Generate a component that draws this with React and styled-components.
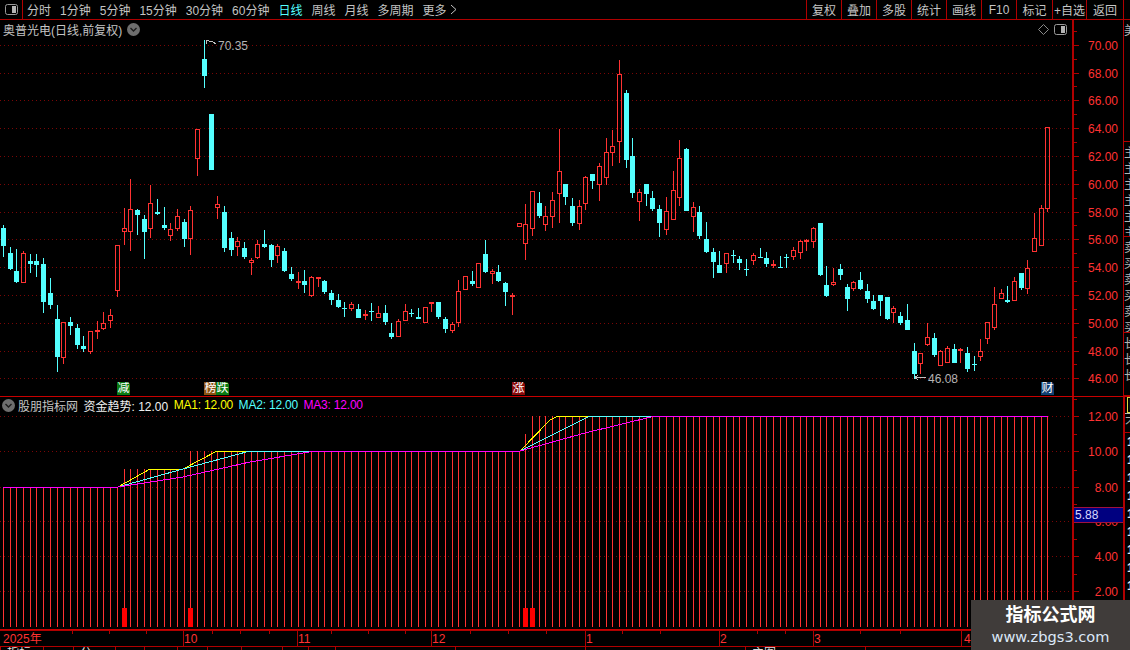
import React from "react";
import styled, { createGlobalStyle } from "styled-components";

const RED = "#ff3232";
const CYAN = "#54ffff";
const YELLOW = "#ffff00";
const MAGENTA = "#ff00ff";
const LINE = "#b00000";
const GRID = "#7a0606";
const UI_FONT = '"Liberation Sans", "Noto Sans CJK SC", sans-serif';

// type, high, body top, body bottom, low (in screen pixels)
const candles = [
  ["c", 225, 228, 246, 257], ["c", 247, 253, 269, 270], ["c", 249, 271, 282, 283], ["r", 251, 253, 283, 283],
  ["c", 254, 261, 264, 273], ["c", 254, 261, 265, 277], ["c", 258, 264, 302, 313], ["c", 278, 293, 305, 309],
  ["c", 305, 319, 357, 372], ["r", 322, 322, 358, 364], ["c", 317, 322, 326, 335], ["c", 324, 328, 345, 349],
  ["c", 336, 346, 349, 352], ["r", 331, 331, 352, 354], ["r", 321, 330, 332, 339], ["r", 312, 323, 329, 330],
  ["r", 309, 315, 321, 328], ["r", 245, 245, 291, 297], ["r", 208, 228, 232, 245], ["r", 179, 209, 232, 251],
  ["c", 209, 210, 215, 235], ["c", 215, 219, 232, 259], ["r", 185, 203, 229, 238], ["c", 199, 212, 214, 215],
  ["c", 207, 225, 228, 230], ["r", 223, 229, 236, 241], ["r", 209, 216, 229, 231], ["c", 219, 222, 239, 247],
  ["r", 206, 210, 239, 255], ["r", 129, 129, 159, 176], ["c", 40, 59, 76, 88], ["c", 114, 114, 170, 170],
  ["r", 196, 204, 208, 219], ["c", 206, 212, 248, 252], ["c", 232, 238, 250, 256], ["r", 237, 241, 247, 256],
  ["c", 242, 248, 257, 259], ["r", 258, 260, 263, 275], ["r", 240, 244, 258, 259], ["c", 230, 244, 247, 248],
  ["c", 244, 245, 260, 267], ["r", 244, 246, 256, 263], ["c", 248, 251, 271, 272], ["c", 267, 274, 279, 281],
  ["r", 272, 281, 282, 289], ["c", 270, 281, 285, 293], ["r", 276, 277, 296, 297], ["r", 277, 277, 278, 287],
  ["c", 280, 281, 292, 294], ["c", 290, 293, 300, 305], ["c", 294, 300, 307, 308], ["c", 302, 308, 309, 317],
  ["r", 302, 304, 309, 311], ["c", 304, 309, 318, 318], ["r", 310, 314, 315, 320], ["c", 303, 311, 312, 321],
  ["r", 306, 313, 318, 318], ["c", 305, 313, 322, 325], ["c", 323, 333, 337, 339], ["r", 319, 321, 337, 337],
  ["r", 304, 311, 321, 321], ["c", 309, 313, 314, 317], ["c", 308, 317, 319, 319], ["r", 307, 307, 323, 323],
  ["r", 302, 302, 304, 312], ["c", 302, 302, 317, 319], ["c", 317, 319, 329, 333], ["r", 322, 324, 331, 333],
  ["r", 280, 291, 323, 327], ["r", 276, 276, 290, 290], ["c", 271, 281, 284, 286], ["r", 263, 263, 288, 288],
  ["c", 240, 254, 272, 273], ["r", 269, 271, 274, 284], ["c", 265, 272, 281, 282], ["c", 282, 283, 292, 306],
  ["r", 293, 295, 297, 315], ["r", 223, 223, 227, 227], ["r", 204, 224, 244, 260], ["r", 191, 191, 229, 236],
  ["c", 192, 203, 216, 218], ["r", 206, 216, 225, 231], ["r", 192, 200, 217, 228], ["r", 129, 171, 194, 223],
  ["c", 184, 184, 197, 205], ["c", 198, 206, 223, 226], ["r", 200, 206, 224, 230], ["r", 176, 177, 204, 210],
  ["c", 174, 174, 181, 189], ["r", 163, 166, 185, 201], ["r", 138, 152, 178, 185], ["r", 130, 146, 153, 166],
  ["r", 60, 74, 142, 163], ["c", 90, 93, 160, 168], ["c", 138, 156, 193, 198], ["r", 189, 192, 202, 221],
  ["c", 184, 184, 194, 206], ["c", 191, 198, 209, 211], ["c", 205, 209, 223, 237], ["r", 197, 211, 230, 235],
  ["r", 171, 190, 220, 220], ["r", 140, 158, 198, 206], ["c", 148, 149, 211, 211], ["r", 202, 207, 217, 232],
  ["c", 206, 212, 236, 239], ["c", 222, 239, 252, 253], ["c", 248, 252, 262, 278], ["c", 251, 265, 273, 273],
  ["r", 253, 253, 264, 273], ["c", 250, 255, 256, 263], ["c", 256, 259, 263, 270], ["c", 259, 269, 270, 276],
  ["r", 253, 255, 261, 265], ["c", 248, 257, 258, 258], ["c", 252, 258, 264, 267], ["r", 260, 264, 265, 268],
  ["c", 256, 267, 268, 268], ["c", 254, 257, 258, 268], ["r", 247, 250, 257, 260], ["r", 240, 241, 253, 259],
  ["r", 239, 240, 242, 251], ["r", 227, 228, 242, 248], ["c", 223, 223, 275, 276], ["c", 266, 285, 296, 297],
  ["r", 268, 282, 285, 286], ["c", 264, 269, 275, 280], ["c", 284, 287, 299, 311], ["r", 281, 282, 289, 291],
  ["c", 272, 280, 289, 290], ["c", 284, 291, 299, 303], ["c", 295, 301, 309, 310], ["c", 295, 295, 301, 316],
  ["c", 297, 297, 319, 320], ["r", 306, 308, 313, 323], ["c", 312, 316, 323, 325], ["c", 304, 320, 330, 330],
  ["c", 343, 351, 374, 379], ["r", 353, 353, 364, 374], ["r", 323, 337, 345, 346], ["c", 333, 338, 355, 357],
  ["r", 350, 351, 366, 366], ["r", 346, 348, 363, 363], ["c", 344, 349, 363, 363], ["r", 348, 349, 351, 363],
  ["c", 347, 353, 369, 372], ["c", 356, 364, 365, 371], ["r", 339, 351, 357, 361], ["r", 322, 322, 339, 344],
  ["r", 287, 304, 328, 330], ["r", 289, 293, 299, 299], ["c", 286, 300, 302, 303], ["r", 277, 281, 301, 301],
  ["c", 273, 273, 288, 290], ["r", 260, 268, 289, 294], ["r", 213, 238, 252, 252], ["r", 205, 208, 246, 246],
  ["r", 127, 127, 209, 212],
];

const barX = (i) => 3 + Math.round(i * 6.695);

const barTop = (i) => {
  if (i < 18) return 487;
  if (i < 28) return 469;
  if (i < 78) return 451;
  if (i === 78) return 434;
  return 416;
};

const priceLevels = [
  [70, 45], [68, 73], [66, 100], [64, 128], [62, 156], [60, 184], [58, 212],
  [56, 239], [54, 267], [52, 295], [50, 323], [48, 351], [46, 378],
];
const indicatorLevels = [
  [12, 416], [10, 451], [8, 487], [6, 521], [4, 556], [2, 591],
];

const thickBars = [18, 28, 78, 79];

const ma1 = "118,487 150,469 183,469 217,451 520,451 550,420 558,416 590,416";
const ma2 = "118,487 183,469 250,451 520,451 590,416 655,416";
const ma3 = "3,487 118,487 183,477 250,462 315,451 520,451 585,433 655,416 1048,416";

const monthLabels = [
  ["2025年", 3], ["10", 184], ["11", 298], ["12", 432], ["1", 586], ["2", 720], ["3", 814], ["4", 964],
];
const monthLines = [183, 297, 431, 585, 719, 813, 961];
const monthTicks = [72, 109, 146, 212, 240, 269, 331, 368, 405, 470, 508, 546, 622, 660, 757, 785, 860, 900, 990, 1030];

const tabs = ["分时", "1分钟", "5分钟", "15分钟", "30分钟", "60分钟", "日线", "周线", "月线", "多周期"];
const tools = [
  ["复权", 35], ["叠加", 35], ["多股", 35], ["统计", 35], ["画线", 35],
  ["F10", 35], ["标记", 36], ["+自选", 34], ["返回", 37],
];
const badges = [
  ["减", 117, "#0b7a12"],
  ["榜", 204, "#8c5212"],
  ["跌", 216, "#0b7a12"],
  ["涨", 512, "#8a0a0a"],
  ["财", 1041, "#123f72"],
];
const quoteCells = [
  [122, "美"],
  [95, "主主主主主主"],
  [96, "卖买卖买卖买"],
  [63, "长长长"],
];
const bottomCells = [
  [43, "指标"], [30, ""], [42, "公"], [29, ""], [33, ""], [30, ""], [34, ""], [41, ""],
  [26, ""], [27, ""], [120, ""], [130, ""], [160, ""], [120, "主图"], [100, ""],
];

const GlobalStyle = createGlobalStyle`
  html, body {
    margin: 0;
    background: #000;
  }
`;

const Page = styled.div`
  position: relative;
  width: 1130px;
  height: 650px;
  overflow: hidden;
  background: #000;
  color: #c4c4c4;
  font-family: ${UI_FONT};
  font-size: 12px;
`;

const Toolbar = styled.div`
  display: flex;
  align-items: center;
  height: 20px;
  box-sizing: border-box;
  border-bottom: 1px solid ${LINE};
`;

const PanelToggle = styled.div`
  display: flex;
  align-items: center;
  justify-content: center;
  width: 23px;
  height: 19px;
  box-sizing: border-box;
  border-right: 1px solid ${LINE};
`;

const TabList = styled.div`
  display: flex;
  align-items: center;
  flex: 1;
  gap: 9px;
  padding-left: 4px;
`;

const Tab = styled.span`
  color: ${(p) => (p.$active ? CYAN : "#c4c4c4")};
  white-space: nowrap;
`;

const MoreTab = styled(Tab)`
  display: flex;
  align-items: center;
  gap: 2px;
`;

const ToolButtons = styled.div`
  display: flex;
  height: 19px;
  margin-right: 6px;
  border-right: 1px solid ${LINE};
`;

const ToolButton = styled.div`
  display: flex;
  align-items: center;
  justify-content: center;
  width: ${(p) => p.$w}px;
  box-sizing: border-box;
  border-left: 1px solid ${LINE};
  white-space: nowrap;
`;

const ChartRow = styled.div`
  display: flex;
  height: ${(p) => p.$h}px;
  box-sizing: border-box;
  border-bottom: 1px solid #c80000;
`;

const ChartColumn = styled.div`
  position: relative;
  display: flex;
  flex-direction: column;
  width: 1072px;
`;

const TitleBar = styled.div`
  display: flex;
  align-items: center;
  flex: none;
  height: 18px;
  padding: 0 3px;
  gap: 5px;
  white-space: nowrap;
`;

const IndicatorBar = styled.div`
  display: flex;
  align-items: center;
  flex: none;
  height: 16px;
  padding: 0 2px;
  gap: 5.5px;
  white-space: nowrap;

  svg {
    margin-right: -2.5px;
  }
`;

const TitleCorner = styled.div`
  display: flex;
  align-items: center;
  gap: 5px;
  margin-left: auto;
  margin-right: 2px;
`;

const Legend = styled.span`
  color: ${(p) => p.$color};
  letter-spacing: ${(p) => (p.$tight ? "-0.2px" : "0")};
`;

const Badge = styled.div`
  position: absolute;
  top: 362px;
  left: ${(p) => p.$x}px;
  display: flex;
  align-items: center;
  justify-content: center;
  width: 13px;
  height: 13px;
  background: ${(p) => p.$bg};
  color: #fff;
  font-size: 12px;
  line-height: 13px;
  clip-path: polygon(0 0, 85% 0, 100% 15%, 100% 100%, 0 100%);
`;

const ChartSvg = styled.svg`
  display: block;
  flex: none;
  font-family: ${UI_FONT};
`;

const AxisColumn = styled.div`
  position: relative;
  width: 51px;
  flex: none;
  border-left: 2px solid ${LINE};
  box-sizing: border-box;
`;

const CurrentValue = styled.div`
  position: absolute;
  top: 110px;
  left: 0;
  right: 0;
  height: 16px;
  padding-left: 1px;
  box-sizing: border-box;
  background: #000080;
  border-top: 1px solid #a01040;
  border-bottom: 1px solid #a01040;
  color: #d8d8ff;
  line-height: 14px;
`;

const QuoteStrip = styled.div`
  flex: 1;
  overflow: hidden;
  box-sizing: border-box;
  border-left: ${(p) => (p.$thick ? 2 : 1)}px solid ${LINE};
`;

const QuoteCell = styled.div`
  height: ${(p) => p.$h}px;
  box-sizing: border-box;
  overflow: hidden;
  width: 14px;
  padding-top: 3px;
  border-bottom: 1px solid ${LINE};
  color: #b4b4b4;
  line-height: 16px;
`;

const QuoteIcon = styled.div`
  width: 12px;
  height: 16px;
  margin-left: 2px;
  box-sizing: border-box;
  border: 1px solid #d8d840;
  color: #d8d840;
  line-height: 14px;
`;

const QuoteTab = styled.div`
  height: 20px;
  width: 14px;
  box-sizing: border-box;
  border-top: 1px solid #bbb;
  border-bottom: 1px solid ${LINE};
  color: #b4b4b4;
  line-height: 18px;
`;

const QuoteNumber = styled.div`
  height: 18px;
  padding-left: 2px;
  color: #e8e8e8;
  font-weight: bold;
  line-height: 18px;
`;

const BottomStrip = styled.div`
  display: flex;
  height: 3px;
  overflow: hidden;
  border-top: 1px solid ${LINE};
  box-sizing: content-box;
`;

const BottomCell = styled.div`
  width: ${(p) => p.$w}px;
  flex: none;
  box-sizing: border-box;
  border-left: 1px solid ${LINE};
  padding-left: 6px;
  color: #ddd;
  line-height: 13px;
`;

const Watermark = styled.div`
  position: absolute;
  right: 0;
  bottom: 0;
  display: flex;
  flex-direction: column;
  align-items: center;
  width: 159px;
  height: 50px;
  padding-top: 4px;
  box-sizing: border-box;
  background: #403c3a;
`;

const WatermarkTitle = styled.div`
  color: #fff;
  font-size: 18px;
  font-weight: bold;
  line-height: 23px;
`;

const WatermarkUrl = styled.div`
  color: #dce8f8;
  font-family: "DejaVu Sans", sans-serif;
  font-size: 14.6px;
  line-height: 19px;
`;

const ToggleIcon = () => (
  <svg width="13" height="11" viewBox="0 0 13 11">
    <rect x="0.5" y="0.5" width="12" height="10" rx="2" fill="none" stroke="#9a9a9a" />
    <rect x="7" y="2" width="4" height="7" fill="#b4b4b4" />
  </svg>
);

const ChevronBadge = () => (
  <svg width="13" height="13" viewBox="0 0 13 13">
    <circle cx="6.5" cy="6.5" r="6.5" fill="#6e6e6e" />
    <path d="M3.5 5 L6.5 8 L9.5 5" fill="none" stroke="#1c1c1c" strokeWidth="1.4" />
  </svg>
);

const PriceChart = () => (
  <ChartSvg width="1072" height="358" viewBox="0 38 1072 358" shapeRendering="crispEdges">
    {priceLevels.map(([price, y]) => (
      <line key={price} x1="0" x2="1072" y1={y + 0.5} y2={y + 0.5} stroke={GRID} strokeDasharray="1 3" />
    ))}
    {candles.map(([type, high, top, bottom, low], i) => {
      const x = barX(i);
      if (type === "c") {
        return (
          <g key={i} fill={CYAN}>
            <rect x={x} y={high} width="1" height={low - high} />
            <rect x={x - 2} y={top} width="5" height={Math.max(bottom - top, 1)} />
          </g>
        );
      }
      return (
        <g key={i} fill={RED}>
          <rect x={x} y={high} width="1" height={Math.max(top - high, 0)} />
          <rect x={x} y={bottom} width="1" height={Math.max(low - bottom, 0)} />
          {bottom - top < 3 ? (
            <rect x={x - 2} y={top} width="5" height={Math.max(bottom - top, 2)} />
          ) : (
            <rect x={x - 1.5} y={top + 0.5} width="4" height={bottom - top - 1} fill="none" stroke={RED} />
          )}
        </g>
      );
    })}
    <path d="M206 40 L206 44 M206 40.5 L209 40.5 M209 41 L213 42 L216 44" fill="none" stroke="#c0c0c0" />
    <text x="218" y="50" fill="#b4b4b4" fontSize="12" shapeRendering="auto">70.35</text>
    <path d="M915 377.5 L926 377.5 M915 377.5 L918 375 M915 377.5 L918 380" fill="none" stroke="#c0c0c0" />
    <text x="928" y="383" fill="#b4b4b4" fontSize="12" shapeRendering="auto">46.08</text>
  </ChartSvg>
);

const IndicatorChart = () => (
  <ChartSvg width="1072" height="217" viewBox="0 413 1072 217" shapeRendering="crispEdges">
    {indicatorLevels.map(([value, y]) => (
      <line key={value} x1="0" x2="1072" y1={y + 0.5} y2={y + 0.5} stroke={GRID} strokeDasharray="1 3" />
    ))}
    {candles.map((_, i) => (
      <rect key={i} x={barX(i)} y={barTop(i)} width="1" height={627 - barTop(i)} fill={RED} />
    ))}
    {thickBars.map((i) => (
      <rect key={i} x={barX(i) - 2} y="608" width="5" height="19" fill="#ff0000" />
    ))}
    <polyline points={ma1} fill="none" stroke={YELLOW} />
    <polyline points={ma2} fill="none" stroke={CYAN} />
    <polyline points={ma3} fill="none" stroke={MAGENTA} />
  </ChartSvg>
);

const AxisScale = ({ levels, top, height }) => {
  const step = levels[0][1] - levels[1][1];
  return (
    <ChartSvg width="49" height={height} viewBox={`1074 ${top} 49 ${height}`} shapeRendering="crispEdges">
      {levels.map(([value, y]) => (
        <g key={value}>
          <rect x="1074" y={y} width="5" height="1" fill={LINE} />
          <rect x="1074" y={y + Math.round(step / 2)} width="3" height="1" fill={LINE} />
          <text x="1118" y={y + 5} textAnchor="end" fill={RED} fontSize="12" shapeRendering="auto">
            {value.toFixed(2)}
          </text>
        </g>
      ))}
    </ChartSvg>
  );
};

const TimeAxis = () => (
  <ChartSvg width="1130" height="16" viewBox="0 630 1130 16" shapeRendering="crispEdges">
    <rect x="0" y="630" width="1124" height="1" fill={LINE} />
    {monthTicks.map((x) => (
      <rect key={x} x={x} y="631" width="1" height="3" fill={LINE} />
    ))}
    {monthLines.map((x) => (
      <rect key={x} x={x} y="631" width="1" height="15" fill={LINE} />
    ))}
    {monthLabels.map(([label, x]) => (
      <text key={label} x={x} y="643" fill={RED} fontSize="12" shapeRendering="auto">
        {label}
      </text>
    ))}
  </ChartSvg>
);

const App = () => (
  <Page>
    <GlobalStyle />
    <Toolbar>
      <PanelToggle>
        <ToggleIcon />
      </PanelToggle>
      <TabList>
        {tabs.map((tab) => (
          <Tab key={tab} $active={tab === "日线"}>{tab}</Tab>
        ))}
        <MoreTab>
          更多
          <svg width="9" height="11" viewBox="0 0 9 11">
            <path d="M2 1 L7 5.5 L2 10" fill="none" stroke="#c4c4c4" />
          </svg>
        </MoreTab>
      </TabList>
      <ToolButtons>
        {tools.map(([label, w]) => (
          <ToolButton key={label} $w={w}>{label}</ToolButton>
        ))}
      </ToolButtons>
    </Toolbar>

    <ChartRow $h={377}>
      <ChartColumn>
        <TitleBar>
          奥普光电(日线,前复权)
          <ChevronBadge />
          <TitleCorner>
            <svg width="11" height="11" viewBox="0 0 11 11">
              <path d="M5.5 0.5 L10.5 5.5 L5.5 10.5 L0.5 5.5 Z" fill="none" stroke="#8a8a8a" />
            </svg>
            <ToggleIcon />
          </TitleCorner>
        </TitleBar>
        <PriceChart />
        {badges.map(([label, x, bg]) => (
          <Badge key={label} $x={x} $bg={bg}>{label}</Badge>
        ))}
      </ChartColumn>
      <AxisColumn>
        <AxisScale levels={priceLevels} top={20} height={376} />
      </AxisColumn>
      <QuoteStrip>
        {quoteCells.map(([h, text]) => (
          <QuoteCell key={text} $h={h}>{text}</QuoteCell>
        ))}
      </QuoteStrip>
    </ChartRow>

    <ChartRow $h={233}>
      <ChartColumn>
        <IndicatorBar>
          <ChevronBadge />
          <span>股朋指标网</span>
          <Legend $color="#f0f0f0">资金趋势: 12.00</Legend>
          <Legend $color={YELLOW} $tight>MA1: 12.00</Legend>
          <Legend $color={CYAN} $tight>MA2: 12.00</Legend>
          <Legend $color={MAGENTA} $tight>MA3: 12.00</Legend>
        </IndicatorBar>
        <IndicatorChart />
      </ChartColumn>
      <AxisColumn>
        <AxisScale levels={indicatorLevels} top={397} height={233} />
        <CurrentValue>5.88</CurrentValue>
      </AxisColumn>
      <QuoteStrip $thick>
        <QuoteIcon>日</QuoteIcon>
        <QuoteTab>不</QuoteTab>
        {[1, 2, 3, 4, 5, 6, 7, 8, 9].map((n) => (
          <QuoteNumber key={n}>1</QuoteNumber>
        ))}
      </QuoteStrip>
    </ChartRow>

    <TimeAxis />
    <BottomStrip>
      {bottomCells.map(([w, text], i) => (
        <BottomCell key={i} $w={w}>{text}</BottomCell>
      ))}
    </BottomStrip>

    <Watermark>
      <WatermarkTitle>指标公式网</WatermarkTitle>
      <WatermarkUrl>www.zbgs3.com</WatermarkUrl>
    </Watermark>
  </Page>
);

export default App;
